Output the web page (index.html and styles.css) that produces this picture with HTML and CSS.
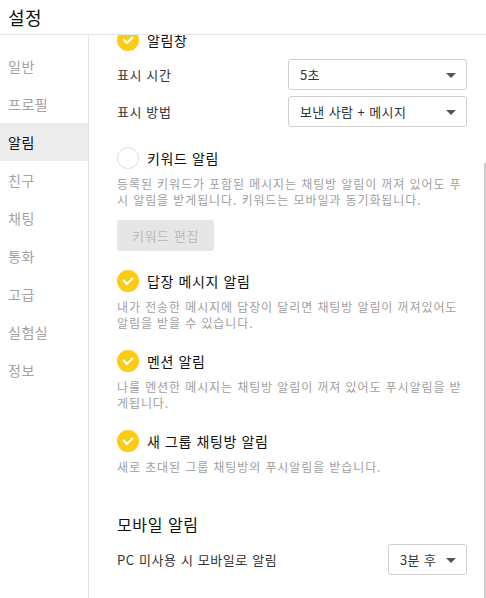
FILE: index.html
```html
<!DOCTYPE html>
<html lang="ko">
<head>
    <meta charset="UTF-8">
    <meta name="viewport" content="width=device-width, initial-scale=1.0">
    <title>설정</title>
    <link rel="stylesheet" href="styles.css">
</head>
<body>

    <div class="header">설정</div>

    <div class="main">
        <ul class="sidebar">
            <li>일반</li>
            <li>프로필</li>
            <li class="active">알림</li>
            <li>친구</li>
            <li>채팅</li>
            <li>통화</li>
            <li>고급</li>
            <li>실험실</li>
            <li>정보</li>
        </ul>

        <div class="content">
            <!-- scrolled a little, so the first row is cut by the header -->
            <div class="option first">
                <span class="check on"></span>
                <span class="option-title">알림창</span>
            </div>

            <div class="row">
                <span class="label">표시 시간</span>
                <div class="select wide">5초</div>
            </div>
            <div class="row tight">
                <span class="label">표시 방법</span>
                <div class="select wide">보낸 사람 + 메시지</div>
            </div>

            <div class="option">
                <span class="check"></span>
                <span class="option-title">키워드 알림</span>
            </div>
            <p class="desc">등록된 키워드가 포함된 메시지는 채팅방 알림이 꺼져 있어도 푸시 알림을 받게됩니다. 키워드는 모바일과 동기화됩니다.</p>
            <button class="btn-disabled">키워드 편집</button>

            <div class="option">
                <span class="check on"></span>
                <span class="option-title">답장 메시지 알림</span>
            </div>
            <p class="desc">내가 전송한 메시지에 답장이 달리면 채팅방 알림이 꺼져있어도 알림을 받을 수 있습니다.</p>

            <div class="option">
                <span class="check on"></span>
                <span class="option-title">멘션 알림</span>
            </div>
            <p class="desc">나를 멘션한 메시지는 채팅방 알림이 꺼져 있어도 푸시알림을 받게됩니다.</p>

            <div class="option">
                <span class="check on"></span>
                <span class="option-title">새 그룹 채팅방 알림</span>
            </div>
            <p class="desc">새로 초대된 그룹 채팅방의 푸시알림을 받습니다.</p>

            <h2 class="section-title">모바일 알림</h2>
            <div class="row mobile">
                <span class="label">PC 미사용 시 모바일로 알림</span>
                <div class="select small">3분 후</div>
            </div>
        </div>

        <div class="scrollbar"></div>
    </div>

</body>
</html>
```

FILE: styles.css
```css
body {
    margin: 0;
    font-family: "Noto Sans CJK KR", "Noto Sans", sans-serif;
    color: #111;
    background-color: #fff;
    height: 598px;
    overflow: hidden;
}
.header {
    height: 34px;
    line-height: 34px;
    padding-left: 8px;
    font-size: 18px;
    letter-spacing: 0.5px;
    border-bottom: 1px solid #e5e5e5;
}
.main {
    position: relative;
    display: flex;
    height: 563px;
    overflow: hidden;
}
.sidebar {
    list-style: none;
    margin: 0;
    padding: 12px 0 0;
    width: 88px;
    flex-shrink: 0;
    border-right: 1px solid #e5e5e5;
}
.sidebar li {
    height: 38px;
    line-height: 38px;
    padding-left: 8px;
    font-size: 14px;
    letter-spacing: 0.5px;
    color: #a3a3a3;
}
.sidebar li.active {
    background-color: #ececec;
    color: #111;
}
.content {
    flex: 1;
    padding: 0 19px 0 28px;
}
.option {
    display: flex;
    align-items: center;
    height: 22px;
    margin-top: 19px;
}
.option.first {
    margin-top: -6px;
}
.check {
    width: 22px;
    height: 22px;
    border-radius: 50%;
    box-sizing: border-box;
    border: 1px solid #dedede;
    background: #fff;
    flex-shrink: 0;
}
.check.on {
    border: none;
    background: #fccb13 url("data:image/svg+xml,%3Csvg xmlns='http://www.w3.org/2000/svg' width='22' height='22'%3E%3Cpath d='M6.5 10.5 L10 14 L15.5 8.5' fill='none' stroke='white' stroke-width='2.2' stroke-linecap='round' stroke-linejoin='round'/%3E%3C/svg%3E") no-repeat center;
}
.option-title {
    margin-left: 8px;
    font-size: 14px;
    letter-spacing: 0.6px;
    color: #111;
}
.row {
    display: flex;
    align-items: center;
    justify-content: space-between;
    margin-top: 8px;
}
.row.tight {
    margin-top: 6px;
}
.row + .option {
    margin-top: 20px;
}
.label {
    font-size: 13px;
    letter-spacing: 0.6px;
    color: #333;
}
.select {
    position: relative;
    height: 31px;
    line-height: 29px;
    box-sizing: border-box;
    border: 1px solid #cfcfcf;
    border-radius: 3px;
    padding-left: 11px;
    font-size: 13px;
    letter-spacing: 0.4px;
    color: #333;
}
.select::after {
    content: "";
    position: absolute;
    right: 10px;
    top: 13px;
    border-left: 5px solid transparent;
    border-right: 5px solid transparent;
    border-top: 5px solid #555;
}
.select.wide {
    width: 179px;
}
.select.small {
    width: 79px;
}
.desc {
    margin: 7px 0 0;
    font-size: 12px;
    line-height: 16px;
    letter-spacing: 0.9px;
    color: #a0a0a0;
}
.btn-disabled {
    display: block;
    margin: 12px 0 1px;
    width: 97px;
    height: 31px;
    border: none;
    border-radius: 3px;
    background-color: #e6e6e6;
    color: #bcbcbc;
    font-family: inherit;
    font-size: 13px;
    letter-spacing: 0.6px;
    padding: 0;
}
.section-title {
    margin: 37px 0 0;
    font-size: 16px;
    font-weight: normal;
    line-height: 24px;
    letter-spacing: 0.6px;
    color: #111;
}
.row.mobile {
    margin-top: 8px;
}
.scrollbar {
    position: absolute;
    right: 0;
    top: 128px;
    bottom: 0;
    width: 2px;
    background-color: #cdcdcd;
}
```
